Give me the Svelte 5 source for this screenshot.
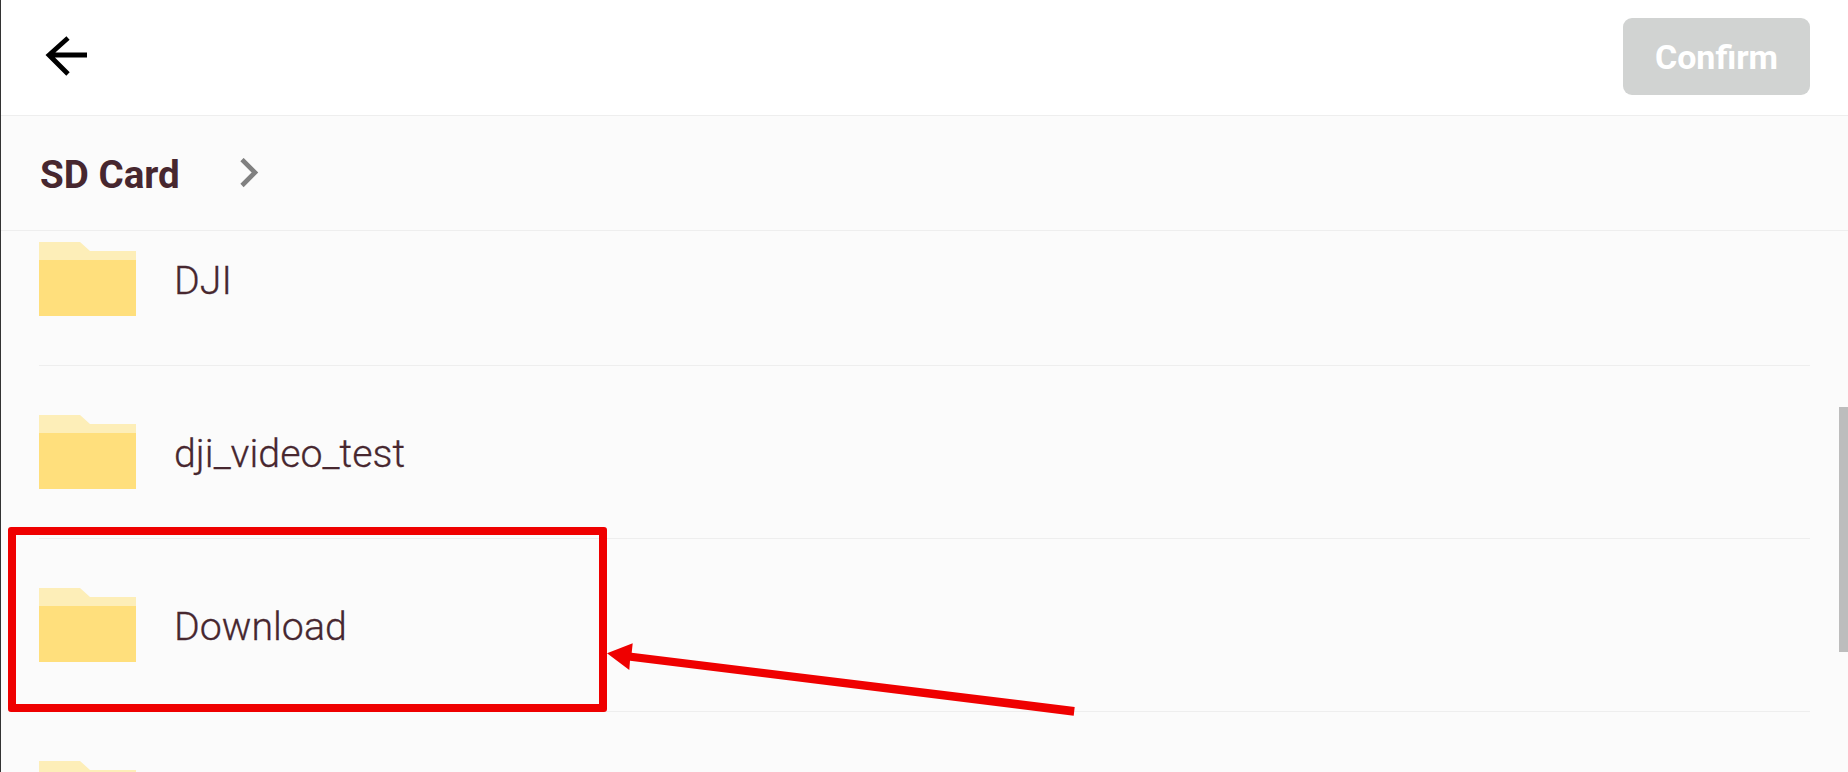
<script lang="ts">
	// last row is only peeking in at the bottom, its label is below the fold
	const folders = ['DJI', 'dji_video_test', 'Download', ''];
</script>

<div class="screen">
	<header class="top-bar">
		<svg class="back" width="48" height="42" viewBox="0 0 48 42" aria-hidden="true">
			<path d="M44 19H6M25 2 6 19l19 19" fill="none" stroke="#000" stroke-width="4.8" />
		</svg>
		<button class="confirm" type="button" disabled>Confirm</button>
	</header>

	<nav class="crumbs">
		<span class="crumb">SD Card</span>
		<svg class="chevron" width="22" height="30" viewBox="0 0 22 30" aria-hidden="true">
			<path d="M3 1.5l13 13L3 27.5" fill="none" stroke="#808080" stroke-width="4.6" />
		</svg>
	</nav>

	<div class="list">
		<!-- list is scrolled a little, so the first row is cut off by the breadcrumb -->
		<ul class="rows">
			{#each folders as name}
				<li class="row">
					<svg class="folder" width="97" height="74" viewBox="0 0 97 74" aria-hidden="true">
						<path d="M0 0h41l10 9h46v10H0z" fill="#fdeeb8" />
						<path d="M0 18h97v56H0z" fill="#ffdf7c" />
					</svg>
					{#if name}
						<span class="name">{name}</span>
					{/if}
				</li>
			{/each}
		</ul>
		<div class="scrollbar"></div>
	</div>

	<!-- red annotation drawn over the screenshot -->
	<div class="callout"></div>
	<svg class="pointer" width="480" height="80" viewBox="0 0 480 80" aria-hidden="true">
		<polygon points="7,13.3 32.7,3.3 31.7,12.7 474.7,67 473.7,75.7 30,20.7 29.3,30" fill="#ef0000" />
	</svg>
</div>

<style>
	:global(body) {
		margin: 0;
		overflow: hidden;
	}

	.screen {
		position: relative;
		display: flex;
		flex-direction: column;
		height: 772px;
		background: #fbfbfb;
		border-left: 1px solid #333;
		font-family: Roboto, 'Liberation Sans', sans-serif;
		color: #47272f;
		overflow: hidden;
	}

	/* ── Top bar ─────────────────────────────────────────────────────────────── */

	.top-bar {
		flex: none;
		display: flex;
		align-items: center;
		justify-content: space-between;
		box-sizing: border-box;
		height: 116px;
		padding: 0 38px 2px 42px;
		background: #fff;
		border-bottom: 1px solid #eee;
	}

	.back {
		display: block;
	}

	.confirm {
		width: 187px;
		height: 77px;
		padding: 0;
		border: none;
		border-radius: 9px;
		background: #d1d3d2;
		color: #fff;
		font-family: inherit;
		font-size: 34px;
		font-weight: 700;
	}

	/* ── Breadcrumb ──────────────────────────────────────────────────────────── */

	.crumbs {
		flex: none;
		display: flex;
		align-items: center;
		gap: 59px;
		box-sizing: border-box;
		height: 115px;
		padding: 3px 0 0 39px;
		border-bottom: 1px solid #eee;
	}

	.crumb {
		font-size: 38.6px;
		font-weight: 700;
	}

	.chevron {
		margin-top: -3px;
	}

	/* ── Folder list ─────────────────────────────────────────────────────────── */

	.list {
		position: relative;
		flex: 1;
		overflow: hidden;
	}

	.rows {
		list-style: none;
		margin: -38px 38px 0 38px;
		padding: 0;
	}

	.row {
		display: flex;
		align-items: center;
		gap: 38px;
		box-sizing: border-box;
		height: 173px;
		border-bottom: 1px solid #eee;
	}

	.folder {
		flex: none;
	}

	.name {
		padding-top: 3px;
		font-size: 39.3px;
		font-weight: 300;
		-webkit-text-stroke: 0.3px #47272f;
	}

	.scrollbar {
		position: absolute;
		top: 176px;
		right: 0;
		width: 9px;
		height: 245px;
		background: #bdbdbd;
	}

	/* ── Annotation ──────────────────────────────────────────────────────────── */

	.callout {
		position: absolute;
		left: 7px;
		top: 527px;
		box-sizing: border-box;
		width: 599px;
		height: 185px;
		border: 8px solid #ef0000;
		border-radius: 3px;
	}

	.pointer {
		position: absolute;
		left: 599px;
		top: 640px;
	}
</style>
